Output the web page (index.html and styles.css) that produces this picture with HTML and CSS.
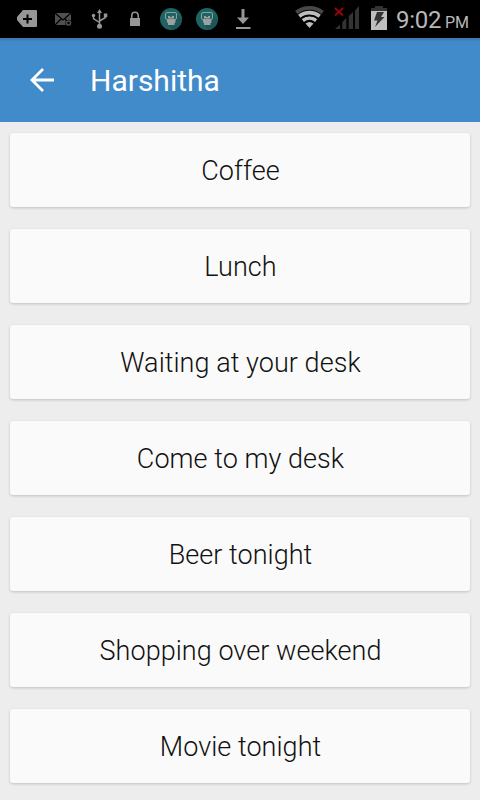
FILE: index.html
```
<!DOCTYPE html>
<html lang="en">
<head>
<meta charset="utf-8">
<title>Harshitha</title>
<link rel="stylesheet" href="styles.css">
</head>
<body>
<div class="status">
  <div class="notifications">
    <svg viewBox="0 0 36 38"><path fill="#969696" d="M14 10h13a1 1 0 0 1 1 1v15a1 1 0 0 1-1 1H14l-6-7v-3z"/><path stroke="#000" stroke-width="2" d="M18.500 14.500v9M14 19h9"/></svg>
    <svg viewBox="0 0 36 38"><path fill="#505050" d="M10 13h16v12H10z"/><path fill="none" stroke="#000" stroke-width="1.300" d="M10 13l8 7 8-7M10 25l6-6M26 25l-6-6"/><circle cx="23.500" cy="23" r="3.200" fill="#000"/><circle cx="23.500" cy="23" r="2" fill="none" stroke="#505050" stroke-width="1.500"/></svg>
    <svg viewBox="0 0 36 38"><g fill="none" stroke="#969696" stroke-width="1.500"><path d="M18.500 12v14M12.500 15v3.500l6 4M24.500 15v2.500l-6 3.500"/></g><g fill="#969696"><path d="M16 13l2.500-4 2.500 4z"/><circle cx="18.500" cy="26.300" r="2.500"/><circle cx="12.500" cy="15.500" r="1.700"/><path d="M22.800 13.500h3.500V17h-3.500z"/></g></svg>
    <svg viewBox="0 0 36 38"><path fill="#969696" d="M13 18h10v8H13z"/><path fill="none" stroke="#969696" stroke-width="1.500" d="M14.800 18v-2.500a3.200 3.200 0 0 1 6.400 0V18"/></svg>
    <svg viewBox="0 0 36 38"><use href="#bot"/></svg>
    <svg viewBox="0 0 36 38"><g id="bot"><circle cx="18" cy="19" r="11" fill="#1f6464"/><path fill="#1b5658" d="M14 24l6 6a11 11 0 0 0 9-10l-6-6z"/><rect x="12.500" y="12.500" width="11" height="7" rx="1.500" fill="#1f6464" stroke="#8fa0a0"/><path fill="#a0a0a0" d="M15 16h2v1h2v-1h2v2.500h-6zM14 20h8.500v2.500l-1 .5v2h-6.500v-2l-1-.5z"/></g></svg>
    <svg viewBox="0 0 36 38"><path fill="#969696" d="M16.500 9h3v8.500H24L18 24l-6-6.500h4.500zM11 27h14.500v2H11z"/></svg>
  </div>
  <svg class="wifi" viewBox="0 0 30 38"><g fill="none" stroke-width="3.700"><path stroke="#484848" d="M1.300 12.500a21 21 0 0 1 26.400 0"/><path stroke="#bebebe" d="M4.300 16.300a16.300 16.300 0 0 1 20.400 0"/><path stroke="#bebebe" d="M7.800 20.500a11 11 0 0 1 13.400 0"/></g><path fill="none" stroke="#000" stroke-width=".8" d="M6 18.700a14 14 0 0 1 17 0"/><path fill="#bebebe" d="M10.500 23.600a6.200 6.200 0 0 1 8 0L14.500 28z"/></svg>
  <svg class="signal" viewBox="0 0 26 38"><path fill="#333" d="M1 29l5-4.500V29zM8.300 22l4-4v11h-4zM14.700 16l4.300-4v17h-4.300zM21 10.500L25 6v23h-4z"/><path stroke="#960606" stroke-width="1.900" d="M1 8l8 7.500M9 8l-8 7.500"/></svg>
  <svg class="battery" viewBox="0 0 18 38"><path fill="#333" d="M5 6h8v2h4v5H1V8h4z"/><path fill="#bebebe" d="M1 11h16v19H1z"/><path fill="#333" d="M7 12h7l-3 5h3.500L5 27l2.500-6.500H4z"/></svg>
  <div class="clock">9:02</div><div class="period">PM</div>
</div>
<header class="toolbar">
  <svg class="back" viewBox="0 0 26 26"><path fill="none" stroke="#fff" stroke-width="2.800" d="M25 13H3M14 2L3 13l11 11"/></svg>
  <h1>Harshitha</h1>
</header>
<main class="list">
  <div class="card">Coffee</div>
  <div class="card">Lunch</div>
  <div class="card">Waiting at your desk</div>
  <div class="card">Come to my desk</div>
  <div class="card">Beer tonight</div>
  <div class="card">Shopping over weekend</div>
  <div class="card">Movie tonight</div>
</main>
</body>
</html>
```
FILE: styles.css
```
* { box-sizing: border-box; }
body {
  margin: 0;
  height: 800px;
  overflow: hidden;
  background: #ededed;
  font-family: Roboto, "Liberation Sans", sans-serif;
}
svg { display: block; flex: none; }
.status {
  display: flex;
  height: 38px;
  padding-left: 9px;
  background: #000;
  color: #b8b8b8;
}
.notifications { display: flex; width: 286px; }
.notifications svg { width: 36px; height: 38px; }
.wifi { width: 30px; height: 38px; }
.signal { width: 26px; height: 38px; margin-left: 9px; }
.battery { width: 18px; height: 38px; margin-left: 10px; }
.clock { width: 49px; margin-left: 8px; font-size: 24px; line-height: 41px; letter-spacing: -0.3px; }
.period { font-size: 16px; line-height: 45px; }
.toolbar {
  display: flex;
  align-items: center;
  height: 84px;
  padding-left: 29px;
  background: linear-gradient(#3a76ad, #428bca 4px);
  color: #fff;
}
.back { width: 26px; height: 26px; }
h1 { margin: 2px 0 0 35px; font-size: 30px; font-weight: 400; line-height: 36px; }
.list {
  display: flex;
  flex-direction: column;
  gap: 22px;
  padding: 11px 10px;
}
.card {
  height: 74px;
  padding-left: 1px;
  border-radius: 3px;
  background: #fafafa;
  box-shadow: 0 1px 3px rgba(0, 0, 0, 0.19);
  color: #111;
  font-size: 27px;
  font-weight: 300;
  line-height: 77px;
  letter-spacing: 0.05px;
  text-align: center;
}
```
